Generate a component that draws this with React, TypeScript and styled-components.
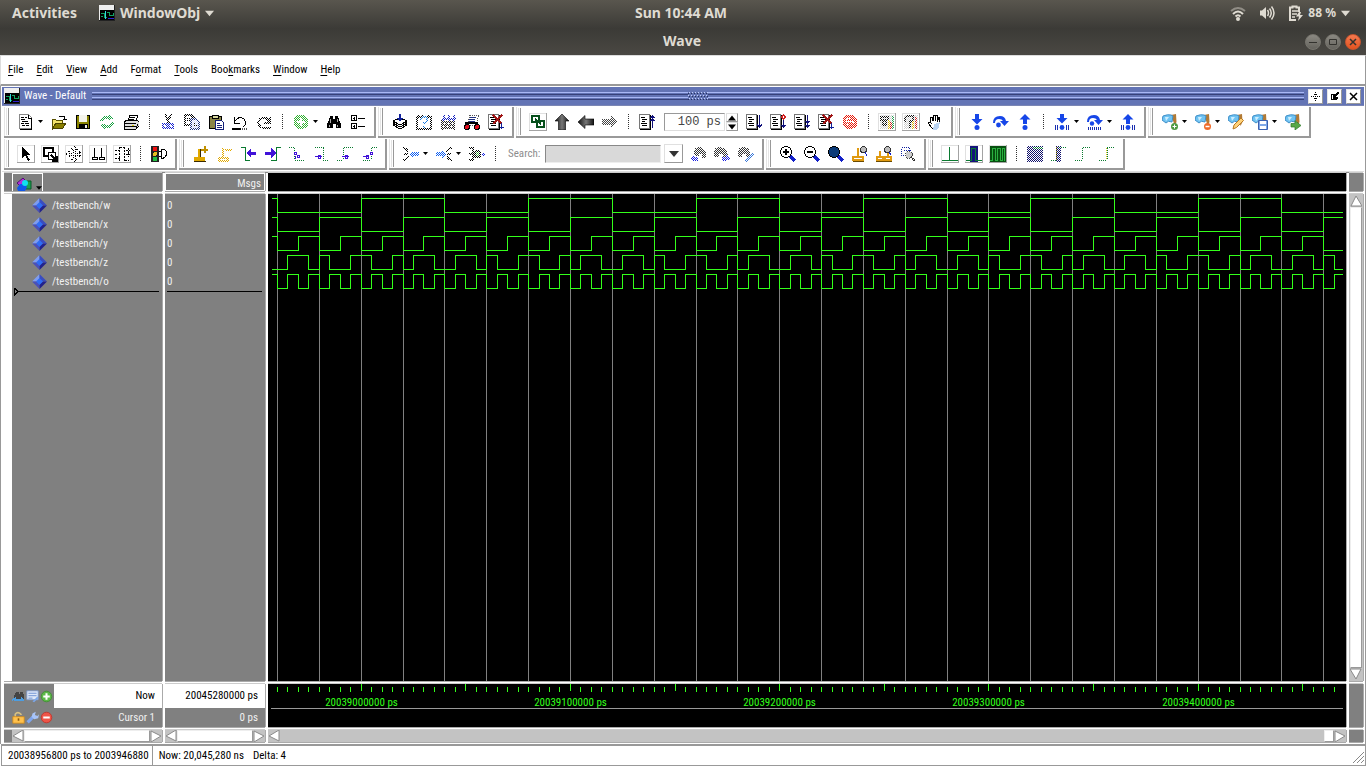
import React, { ReactNode } from "react";
import styled, { createGlobalStyle, css } from "styled-components";

const GlobalStyle = createGlobalStyle`
  * { box-sizing: border-box; }
  body { margin: 0; background: #fff; font-family: "Roboto Condensed", "Liberation Sans Narrow", "Liberation Sans", sans-serif; font-size: 11px; line-height: 14px; color: #000; }
  button, input { font: inherit; color: inherit; margin: 0; padding: 0; border: 0; background: none; border-radius: 0; }
`;

/* ---------- desktop chrome ---------- */

const Page = styled.div`
  display: flex;
  flex-direction: column;
  min-height: 100vh;
`;

const TopBar = styled.header`
  display: grid;
  grid-template-columns: 1fr auto 1fr;
  align-items: center;
  height: 28px;
  padding: 0 16px 2px 12px;
  background: linear-gradient(#59564e, #3c3b37);
  color: #dfdbd2;
  font: bold 14px/26px "Noto Sans", "Open Sans", sans-serif;
`;

const BarGroup = styled.div<{ $end?: boolean }>`
  display: flex;
  align-items: center;
  justify-content: ${(p) => (p.$end ? "flex-end" : "flex-start")};
  gap: ${(p) => (p.$end ? "13px" : "22px")};
`;

const BarButton = styled.button<{ $small?: boolean }>`
  display: flex;
  align-items: center;
  gap: 5px;
  white-space: nowrap;
  font-size: ${(p) => (p.$small ? "12px" : "14px")};
`;

const TitleBar = styled.div`
  display: grid;
  grid-template-columns: 1fr auto 1fr;
  align-items: center;
  height: 27px;
  padding: 0 5px 0 3px;
  background: linear-gradient(#3b3a36, #4a4843);
  color: #dfdbd2;
  font: bold 14px/26px "Noto Sans", "Open Sans", sans-serif;
`;

const WindowTitle = styled.h1`
  grid-column: 2;
  margin: 0 0 2px;
  font: inherit;
`;

const WindowButtons = styled.div`
  display: flex;
  justify-content: flex-end;
  gap: 4px;
`;

const RoundButton = styled.button<{ $close?: boolean }>`
  display: grid;
  place-items: center;
  width: 16px;
  height: 16px;
  border-radius: 50%;
  border: 1px solid ${(p) => (p.$close ? "#c8552f" : "#77756e")};
  background: ${(p) => (p.$close ? "linear-gradient(#f5794f, #e2531f)" : "linear-gradient(#8b8982, #65635d)")};
  color: #33322e;
`;

const MenuBar = styled.nav`
  display: flex;
  align-items: center;
  gap: 13px;
  height: 31px;
  padding: 0 7px;
  border: solid #999;
  border-width: 1px 1px 2px;
  border-top-color: #ddd;
  border-left-color: #ddd;
`;

const MenuButton = styled.button`
  text-underline-offset: 2px;
`;

/* ---------- wave panel frame ---------- */

const Panel = styled.main`
  flex: 1;
  display: flex;
  flex-direction: column;
  border: solid #999;
  border-width: 0 1px;
  padding: 1px 1px 0;
`;

const PanelTitle = styled.div`
  display: flex;
  align-items: center;
  height: 19px;
  padding: 0 3px 0 2px;
  background: #6374b5;
  color: #fff;
  border-bottom: 1px solid #7b86b4;
`;

const PanelName = styled.h2`
  margin: 0 6px 0 4px;
  font: inherit;
`;

const GripArea = styled.div`
  position: relative;
  flex: 1;
  display: flex;
  flex-direction: column;
  gap: 2px;
`;

const GripLine = styled.div`
  height: 3px;
  border-top: 1px solid #a9b8f5;
  border-bottom: 1px solid #37427a;
`;

const GripDots = styled.svg`
  position: absolute;
  left: calc(50% - 10px);
  top: 0;
`;

const PanelButtons = styled.div`
  display: flex;
  gap: 4px;
  margin-left: 4px;
`;

const PanelButton = styled.button`
  display: grid;
  place-items: center;
  width: 15px;
  height: 15px;
  background: #fff;
  border: 1px solid #e6e6e6;
  border-right-color: #999;
  border-bottom-color: #999;
`;

/* ---------- toolbars ---------- */

const ToolbarArea = styled.div`
  display: flex;
  flex-direction: column;
  gap: 1px;
  padding: 1px 0 1px 2px;
  border-bottom: 1px solid #ddd;
`;

const ToolbarRow = styled.div`
  display: flex;
  gap: 2px;
`;

const ToolbarBox = styled.div`
  display: flex;
  align-items: center;
  height: 31px;
  padding-right: 4px;
  border: solid #999;
  border-width: 0 2px 2px 0;
  box-shadow: inset 1px 0 #e4e4e4;
`;

const Handle = styled.div`
  width: 3px;
  height: 27px;
  margin: 0 5px 0 2px;
  border-left: 1px solid #e4e4e4;
  border-right: 1px solid #999;
`;

const ToolButton = styled.button<{ $raised?: boolean }>`
  display: grid;
  place-items: center;
  flex: none;
  width: 24px;
  height: 24px;
  ${(p) =>
    p.$raised &&
    css`
      background: linear-gradient(#a3a3a3, #a3a3a3) 3px 20px / 18px 1px no-repeat,
        linear-gradient(#a3a3a3, #a3a3a3) 20px 3px / 1px 18px no-repeat,
        linear-gradient(#e0e0e0, #e0e0e0) 3px 3px / 18px 1px no-repeat,
        linear-gradient(#e0e0e0, #e0e0e0) 3px 3px / 1px 18px no-repeat;
    `}
`;

const DropButton = styled.button`
  display: grid;
  place-items: center;
  width: 9px;
  height: 20px;
  padding-right: 4px;
`;

const Separator = styled.div`
  width: 1px;
  height: 16px;
  margin: 0 6px;
  background: repeating-linear-gradient(#333 0 1px, transparent 1px 2px);
`;

const RunLength = styled.div`
  display: flex;
  gap: 1px;
  margin: 0 4px 0 5px;
`;

const RunInput = styled.input`
  width: 61px;
  height: 18px;
  padding-right: 3px;
  border: 1px solid #999;
  border-right-color: #ddd;
  border-bottom-color: #ddd;
  text-align: right;
  font: 12px/16px "Liberation Mono", monospace;
  color: #444;
`;

const Spinner = styled.div`
  display: flex;
  flex-direction: column;
`;

const SpinButton = styled.button`
  display: grid;
  place-items: center;
  width: 12px;
  height: 9px;
  border: 1px solid #e0e0e0;
  border-right-color: #999;
  border-bottom-color: #999;
`;

const SearchLabel = styled.label`
  margin: 0 5px 0 6px;
  color: #8c8c8c;
`;

const SearchInput = styled.input`
  width: 116px;
  height: 18px;
  background: #d9d9d9;
  border: 1px solid #888;
  border-right-color: #eee;
  border-bottom-color: #eee;
`;

const SearchDrop = styled.button`
  display: grid;
  place-items: center;
  width: 19px;
  height: 19px;
  margin: 0 3px;
  border: 1px solid #e0e0e0;
  border-right-color: #999;
  border-bottom-color: #999;
`;

/* ---------- wave table ---------- */

const WaveGrid = styled.div`
  flex: 1;
  display: grid;
  grid-template-columns: 158px 100px 1fr 14px;
  grid-template-rows: 18px 1fr 43px 12px;
  gap: 3px;
  margin: 0 1px 2px 2px;
  border-top: 1px solid #888;
`;

const Cell = styled.div<{ $tone?: "gray" | "black" | "trough" }>`
  min-width: 0;
  overflow: hidden;
  background: ${(p) => (p.$tone === "black" ? "#000" : p.$tone === "trough" ? "#c3c3c3" : "#808080")};
  color: #f0f0f0;
  box-shadow: 1px 0 #aaa, 0 1px #aaa, 0 -1px #ccc;
`;

const HeadNames = styled(Cell)`
  padding-left: 8px;
`;

const ShapeButton = styled.button`
  display: flex;
  align-items: flex-end;
  gap: 3px;
  width: 31px;
  height: 18px;
  padding: 0 0 0 3px;
  border: 1px solid #fff;
  border-bottom: 0;
`;

const HeadMsgs = styled(Cell)`
  border: 1px solid #fff;
  padding: 3px 3px 0 0;
  text-align: right;
`;

const NamesPane = styled(Cell)`
  border-left: 8px solid #fff;
  padding-top: 2px;
`;

const List = styled.ul`
  list-style: none;
  margin: 0;
  padding: 0;
`;

const SignalRow = styled.li<{ $value?: boolean }>`
  display: flex;
  align-items: center;
  gap: 5px;
  height: 19px;
  padding-left: ${(p) => (p.$value ? "2px" : "20px")};
`;

const ValuesPane = styled(Cell)`
  padding-top: 2px;
`;

const InsertMark = styled.svg`
  display: block;
  width: 100%;
  height: 9px;
  margin-top: -3px;
  padding: 0 3px 0 2px;
`;

const WavePane = styled(Cell)`
  padding: 0 3px;
`;

const Plot = styled.svg`
  display: block;
  width: 100%;
  height: 100%;
`;

const CursorNames = styled(Cell)`
  display: grid;
  grid-template-columns: 50px 1fr;
  grid-template-rows: 24px 19px;
`;

const CursorIcons = styled.div`
  display: flex;
  align-items: center;
  justify-content: flex-end;
  gap: 1px;
  padding-right: 1px;
`;

const SmallButton = styled.button`
  display: grid;
  width: 13px;
  height: 13px;
`;

const CursorText = styled.div<{ $light?: boolean }>`
  display: flex;
  align-items: center;
  justify-content: flex-end;
  padding-right: 7px;
  background: ${(p) => (p.$light ? "#fff" : "transparent")};
  color: ${(p) => (p.$light ? "#000" : "#f0f0f0")};
`;

const CursorValues = styled(Cell)`
  display: grid;
  grid-template-rows: 24px 19px;
`;

const ScrollX = styled(Cell)<{ $corner?: boolean }>`
  display: flex;
  border-left: ${(p) => (p.$corner ? "8px solid #808080" : "0")};
`;

const ScrollY = styled(Cell)`
  display: flex;
  flex-direction: column;
  align-items: center;
  padding: 1px;
`;

const ScrollArrow = styled.button`
  display: grid;
  place-items: center;
  width: 12px;
  height: 12px;
`;

const Thumb = styled.div<{ $small?: boolean; $vertical?: boolean }>`
  flex: ${(p) => (p.$small ? "none" : "1")};
  width: ${(p) => (p.$small ? "10px" : p.$vertical ? "12px" : "auto")};
  margin-left: ${(p) => (p.$small ? "auto" : "0")};
  background: #fff;
  border: 1px solid #eee;
  border-right-color: #999;
  border-bottom-color: #999;
`;

const StatusBar = styled.footer`
  display: flex;
  height: 22px;
  margin: 0 0 2px 1px;
  border: 1px solid #999;
  border-top-width: 2px;
`;

const StatusCell = styled.div<{ $range?: boolean }>`
  flex: ${(p) => (p.$range ? "none" : "1")};
  display: flex;
  align-items: center;
  gap: 9px;
  padding: 0 3px 0 6px;
  white-space: nowrap;
  border-right: 1px solid ${(p) => (p.$range ? "#999" : "transparent")};
`;

/* ---------- icons ---------- */

const K = "#000";
const BLUE = "#1646e8";
const GREEN = "#0a7a30";
const AMBER = "#e0a800";

const Art = ({ children, dim, smooth, size = 16 }: { children: ReactNode; dim?: boolean; smooth?: boolean; size?: number }) => (
  <svg width={size} height={size} viewBox="0 0 16 16" fill="none" shapeRendering={smooth ? "auto" : "crispEdges"} aria-hidden="true">
    {children}
    {dim && <path d="M0 0h16v16H0z" fill="url(#stipple)" />}
  </svg>
);

const PageLines = () => (
  <>
    <path d="M.5 .5h10v14h-10z" fill="#fff" stroke="#777" />
    <path d="M11 1v14.500H1" stroke={K} />
    <path d="M2 3.500h4M3 5.500h5M3 7.500h3M2 9.500h6M3 11.500h5" stroke={K} />
  </>
);
const flag = (
  <>
    <path d="M9 1l5-1 .5 8-2 4-1-4z" fill="#b27a35" />
    <path d="M1 2q5-2 8-1l2 1-1 6q-4-2-6 1L0 6z" fill="#6fc3f2" stroke="#3f8fc9" />
    <path d="M3 3l4 0-3 4z" fill="#cdeeff" />
  </>
);
const lens = (fill: string) => (
  <>
    <path d="M10 10l5 5" stroke="#1320c8" strokeWidth="3" />
    <circle cx="6" cy="6" r="5.500" fill={fill} stroke={K} />
  </>
);
const binocular = <path d="M4 2h3v3h2V2h3l1 4 2 4v4h-5v-4H7v4H1v-4l2-4z" fill={K} />;

const icons: Record<string, ReactNode> = {
  doc: (<Art><path d="M1.500 .5h9l3 3v11h-12z" fill="#fff" stroke="#888" /><path d="M13.500 4v11.500H2M10.500 1v3h3" stroke={K} /><path d="M3 3.500h3M7 3.500h2M3 5.500h4M4 7.500h6M3 9.500h3M7 9.500h4M4 11.500h3M8 11.500h3" stroke={K} /></Art>),
  open: (<Art><path d="M1 5h3l1 1h6v3H6l-4 6H1z" fill="#f3e36a" stroke="#5a5200" /><path d="M2 14l3-5h10l-3 5z" fill="#8a8000" stroke="#4a4400" /><path d="M8 3l2-1h3l1 3M12 5h4V2" stroke={K} /></Art>),
  save: (<Art><path d="M1.500 1.500h13v13h-13z" fill="#8a8400" stroke={K} /><path d="M4 1h8v7H4z" fill="#f4f4ec" /><path d="M4 10h9v5H4z" fill={K} /><path d="M10 11h2v3h-2z" fill="#eee" /></Art>),
  refresh: (<Art dim><path d="M1 7q3-6 9-5V0l5 4-5 3V5q-5-1-6 3zM15 9q-3 6-9 5v2l-5-4 5-3v2q5 1 6-3z" fill="#18a040" /></Art>),
  print: (<Art><path d="M5 7l2-6h8l-2 6z" fill="#fff" stroke={K} /><path d="M7 3.500h5M6 5.500h5" stroke={K} /><path d="M1 8l3-2h10l2 2v4l-3 3H1z" fill="#ddd" stroke={K} /><path d="M1 9.500h12M1 12.500h12M13 14l2-4" stroke={K} /><path d="M9 11h2v1H9z" fill="#d8c800" /></Art>),
  cut: (<Art dim><path d="M5 0l4 9M11 0L7 9" stroke={K} strokeWidth="2" /><circle cx="5" cy="12" r="2.500" stroke="#1420d0" strokeWidth="2" /><circle cx="11" cy="12" r="2.500" stroke="#1420d0" strokeWidth="2" /></Art>),
  copy: (<Art dim><path d="M1 1h6l3 3v7H1z" stroke={K} strokeWidth="2" /><path d="M7 5h5l3 3v7H7z" fill="#cfd4ff" stroke="#203080" strokeWidth="2" /><path d="M3 4h3M3 6h3M9 9h3M9 11h4" stroke={K} /></Art>),
  paste: (<Art><path d="M1 2h12v12H1z" fill="#8a8548" stroke={K} /><path d="M4 1h6v3H4z" fill="#d8d8a0" stroke={K} /><path d="M7 6h6l2 2v7H7z" fill="#fff" stroke="#14207a" /><path d="M9 9.500h3M9 11.500h5M9 13.500h5" stroke="#14207a" /></Art>),
  undo: (<Art><path d="M2 3v6h6M2 8q5-7 10-3 4 5-1 8" stroke={K} /><path d="M0 15h9" stroke={K} strokeWidth="2" /><path d="M10 15h6" stroke="#555" strokeWidth="2" strokeDasharray="1 1" /></Art>),
  redo: (<Art dim><path d="M14 3v6H8M14 8Q9 1 4 5q-4 5 1 8" stroke={K} strokeWidth="2" /><path d="M6 14h9" stroke={K} strokeWidth="2" /></Art>),
  add: (<Art dim><circle cx="8" cy="8" r="7.500" fill="#30b030" /><path d="M7 4h2v3h3v2H9v3H7V9H4V7h3z" fill="#fff" /></Art>),
  find: (<Art>{binocular}<path d="M4 5v4M11 5v3M3 11v2M11 11v2" stroke="#aaa" /></Art>),
  tree: (<Art><path d="M1.500 1.500h5v5h-5zM1.500 9.500h5v5h-5z" stroke={K} /><path d="M3 4.500h2M4.500 3v3M3 12.500h2M4.500 11v3M8 4.500h7M8 12.500h7" stroke={K} /></Art>),
  compile: (<Art><path d="M1 11l7-3 7 3-7 4z" fill="#fff" stroke={K} /><path d="M1 9l7-3 7 3-7 4z" fill="#fff" stroke={K} /><path d="M1 7l7-3 7 3-7 4z" fill="#fff" stroke={K} /><path d="M7 0h2v4h2L8 8 5 4h2z" fill="#10209a" /></Art>),
  help: (<Art dim><path d="M1 3h14v12H1zM3 1v3M7 1v3M12 1v3" stroke={K} strokeWidth="2" /><path d="M5 6q0-3 3-3t3 3q0 2-3 3v1M8 12v2" stroke="#1c7ce0" strokeWidth="2" /></Art>),
  compileAll: (<Art dim><path d="M1 8h14M1 11h14M1 14h14M2 6v10M6 8v7M10 8v7M14 6v10" stroke="#222" strokeWidth="2" /><path d="M4 1v6M9 1v6M14 1v6M2 5h14" stroke="#1420c0" strokeWidth="2" /></Art>),
  simulate: (<Art><path d="M6 1h9l-3 10H3z" fill="#fff" stroke="#555" strokeDasharray="1 1" /><path d="M6 3.500h6M5 5.500h6M5 7.500h6" stroke="#203080" /><path d="M1 9h13" stroke={K} strokeWidth="2" /><circle cx="3" cy="13" r="2.500" fill="#e01020" stroke={K} /><circle cx="13" cy="13" r="2.500" fill="#e01020" stroke={K} /></Art>),
  breakSim: (<Art><PageLines /><path d="M5 1l9 9M14 1l-9 9" stroke="#a01414" strokeWidth="2" /><path d="M13.500 9v6M12 13.500h4" stroke="#10209a" /></Art>),
  link: (<Art><path d="M2 2h7v6H2zM7 7h7v6H7z" stroke="#06501c" strokeWidth="2" /><path d="M5 5l6 5" stroke="#06501c" strokeWidth="2" /></Art>),
  up: (<Art smooth><path d="M8 0l7 7h-3.500v9h-7V7H1z" fill="url(#metal)" stroke={K} strokeWidth=".6" /></Art>),
  left: (<Art smooth><path d="M0 8l7-6.500V5h9v6H7v3.500z" fill="url(#metal)" stroke={K} strokeWidth=".6" /></Art>),
  right: (<Art dim><path d="M16 8L9 2v3H0v6h9v3z" fill="#444" /></Art>),
  restart: (<Art><PageLines /><path d="M13.500 1v13M11 3.500h5M12 2.500h3M11 6.500h5M12 5.500h3" stroke="#10107a" /></Art>),
  run: (<Art><PageLines /><path d="M13.500 1v13M11 11.500h5M12 12.500h3M11 10.500h1M15 10.500h1" stroke="#10107a" /></Art>),
  runCont: (<Art><PageLines /><path d="M13.500 6v8M11 11.500h5M12 12.500h3" stroke="#10107a" /><path d="M13.500 1l2 2-2 2-2-2z" stroke="#d02020" /></Art>),
  runAll: (<Art><PageLines /><path d="M13.500 1v13M11 11.500h5M12 12.500h3M11 7.500h5M12 8.500h3" stroke="#10107a" /></Art>),
  stop: (<Art dim><circle cx="8" cy="8" r="6" fill="#fff" stroke="#e81808" strokeWidth="3" /><path d="M5 6h7M4 9h7M6 11h6M8 4h3" stroke="#e81808" strokeWidth="2" /></Art>),
  perf: (<Art><path d="M1 1h14v14H1z" fill="#cfcfcf" /><path d="M2 3h7v3H2zM4 6h3v5H4z" stroke="#111" strokeWidth="2" /><path d="M9 6h2v9H9z" fill="#d8b000" /><path d="M13 2h2v13h-2z" fill="#20a050" /><path d="M11 8h2v7h-2z" fill="#d02020" /><path d="M0 0h16v16H0z" fill="url(#stipple)" /></Art>),
  memory: (<Art><path d="M1 1h14v14H1z" fill="#cfcfcf" /><path d="M2 8V5q1-3 4-3h4v5H7v7" stroke="#111" strokeWidth="2" /><path d="M9 7h2v8H9z" fill="#d8b000" /><path d="M12 3h2v12h-2z" fill="#d02020" /><path d="M0 0h16v16H0z" fill="url(#stipple)" /></Art>),
  hand: (<Art><path d="M5 14L1 9l1-1 2 1-1-6h2l1 4V1h2v6l1-6h1v7l2-5h1l-1 7-2 5z" fill="#fff" stroke={K} /><path d="M7 10l6-2-1 5-3 3H6z" fill="#b9d3f2" /></Art>),
  stepIn: (<Art smooth><path d="M6 0h4v5h3.500L8 10.500 2.500 5H6z" fill={BLUE} /><circle cx="8" cy="13.500" r="2.500" fill={BLUE} /></Art>),
  stepOver: (<Art smooth><path d="M0 9q0-7 7-7 5 0 6 5h3l-4.500 5L7 7h3Q9 5 6 5 2 5 2 9z" fill={BLUE} /><circle cx="5.500" cy="11" r="2.400" fill={BLUE} /></Art>),
  stepOut: (<Art smooth><path d="M6 10h4V5.500h3.500L8 0 2.500 5.500H6z" fill={BLUE} /><circle cx="8" cy="13.500" r="2.500" fill={BLUE} /></Art>),
  stepInC: (<Art smooth><path d="M6 0h4v4h3.500L8 9.500 2.500 4H6z" fill={BLUE} /><path d="M1.500 11v5M3.500 11v5M12.500 11v5M14.500 11v5" stroke="#1a2fb0" /><circle cx="8" cy="13.500" r="2.400" fill={BLUE} /></Art>),
  stepOverC: (<Art smooth><path d="M0 8q0-7 7-7 5 0 6 5h3l-4.500 5L7 6h3Q9 4 6 4 2 4 2 8z" fill={BLUE} /><circle cx="5" cy="9.500" r="2.200" fill={BLUE} /><path d="M1.500 13v3M3.500 13v3M5.500 13v3M7.500 13v3M9.500 13v3M11.500 13v3M13.500 13v3" stroke="#1a2fb0" /></Art>),
  stepOutC: (<Art smooth><path d="M6 10h4V5.500h3.500L8 0 2.500 5.500H6z" fill={BLUE} /><path d="M1.500 11v5M3.500 11v5M12.500 11v5M14.500 11v5" stroke="#1a2fb0" /><circle cx="8" cy="13.500" r="2.400" fill={BLUE} /></Art>),
  flagAdd: (<Art smooth>{flag}<circle cx="12.500" cy="12.500" r="3.500" fill="#4d9a42" /><path d="M10.500 12.500h4M12.500 10.500v4" stroke="#fff" /></Art>),
  flagDel: (<Art smooth>{flag}<circle cx="12.500" cy="12.500" r="3.500" fill="#ef6a28" /><path d="M10.500 12.500h4" stroke="#fff" strokeWidth="1.500" /></Art>),
  flagEdit: (<Art smooth>{flag}<path d="M5 15l1-4 7-7 2.500 2.500-7 7z" fill="#ffd27a" stroke="#b87820" /></Art>),
  flagSave: (<Art smooth>{flag}<path d="M6.500 6.500h9v9h-9z" fill="#7fa8e8" stroke="#3c62b0" /><path d="M8 7h6v3H8zM8 12h6v3H8z" fill="#fff" /></Art>),
  flagGo: (<Art smooth>{flag}<path d="M6 9.500h4V6.500l6 5-6 4.500v-3H6z" fill="#58a848" stroke="#2f7a28" strokeWidth=".7" /></Art>),
  pointer: (<Art><path d="M4 1v11l3-3 3 6 2-1-3-5h4z" fill={K} /></Art>),
  zoomSel: (<Art><path d="M2 2h9v8H2z" stroke={K} strokeWidth="2" /><path d="M6 6h7v7H6z" fill="#fff" stroke={K} /><path d="M9 9l5 5M15 10v5h-5" stroke={K} strokeWidth="2" /></Art>),
  pan: (<Art><path d="M8 0l3 3H9v4h4V5l3 3-3 3V9H9v4h2l-3 3-3-3h2V9H3v2L0 8l3-3v2h4V3H5z" fill="#fff" stroke={K} strokeDasharray="1 1" /></Art>),
  cursors: (<Art><path d="M4.500 2v9M11.500 2v9M2 11.500h5v2H2zM9 11.500h5v2H9z" stroke={K} /></Art>),
  edit: (<Art><path d="M1 4.500h5M1 8.500h3M1 12.500h5M5.500 1v14M10.500 1v14M6 1.500h5M11 14.500h4M12 4.500h4M12 8.500h4M14 2v5M14 7v4" stroke={K} strokeDasharray="2 1" /></Art>),
  traffic: (<Art><path d="M0 0h8v16H0z" fill="#222" /><circle cx="4" cy="3" r="2.500" fill="#f01010" /><circle cx="4" cy="8" r="2" fill="#e8c020" /><circle cx="4" cy="13" r="2.200" fill="#20c040" /><path d="M10.500 3v9h2q3-1 3-4.500t-3-4.500zM8 5h2M8 10h2" stroke={K} /></Art>),
  curAdd: (<Art><path d="M6 3v8M2 12h9v2H2z" stroke={AMBER} strokeWidth="2" /><path d="M7.500 3v8M1 15.500h12" stroke="#3a2a00" /><path d="M11.500 0v7M8 3.500h7" stroke="#c09000" strokeWidth="2" /></Art>),
  curDel: (<Art dim><path d="M6 2v9M2 12h9v3H2zM8 4h7" stroke={AMBER} strokeWidth="2" /></Art>),
  edgeL: (<Art><path d="M0 1.500h4.500v12.500H9" stroke={GREEN} /><path d="M5 7l5-5v3.500h5v3h-5V12z" fill="#4012d8" /></Art>),
  edgeR: (<Art><path d="M16 1.500h-4.500V14H6" stroke={GREEN} /><path d="M11 7L6 2v3.500H0v3h6V12z" fill="#4012d8" /></Art>),
  ed1: (<Art><path d="M0 1.500h5M5.500 2v12M6 14.500h10" stroke={GREEN} strokeDasharray="1 1" /><path d="M5 6h2v2H5zM8 9h2v2H8zM6 10v3" stroke="#4012d8" /></Art>),
  ed2: (<Art><path d="M2 1.500h9M10.500 2v12M10 14.500h6" stroke={GREEN} strokeDasharray="1 1" /><path d="M2 10.500h7M5 9h2v3H5z" stroke="#4012d8" /></Art>),
  ed3: (<Art><path d="M7 1.500h9M6.500 2v12M0 14.500h6" stroke={GREEN} strokeDasharray="1 1" /><path d="M5 10.500h7M8 9h2v3H8z" stroke="#4012d8" /></Art>),
  ed4: (<Art><path d="M11 1.500h5M10.500 2v12M2 14.500h8" stroke={GREEN} strokeDasharray="1 1" /><path d="M2 10.500h6M5 9h2v3H5zM9 6h2v2H9z" stroke="#4012d8" /></Art>),
  nav1: (<Art dim><path d="M0 2q3 0 5 4M0 14q3 0 5-4M1 8h4" stroke={K} strokeWidth="2" /><path d="M6 8l4-4v2h6v4h-6v2z" fill="#0c5cf0" /></Art>),
  nav2: (<Art dim><path d="M16 2q-3 0-5 4M16 14q-3 0-5-4M15 8h-4" stroke={K} strokeWidth="2" /><path d="M10 8L6 4v2H0v4h6v2z" fill="#0c5cf0" /></Art>),
  nav3: (<Art dim><path d="M0 2h4M0 8h4M0 14h4M4 1v14" stroke={K} strokeWidth="2" /><circle cx="8.500" cy="8" r="3" fill="#40a040" stroke={K} strokeWidth="2" /><path d="M13 8h3" stroke="#1420e0" strokeWidth="3" /></Art>),
  findL: (<Art dim><path d="M4 9V5q1-4 5-4 5 0 7 6v5h-4V8H9v3z" fill="#333" /><path d="M0 13l4-4v2h4v4H4z" fill="#1a20e0" /></Art>),
  findR: (<Art dim><path d="M0 11V5q1-4 5-4 6 0 9 7v3H9V8H5v3z" fill="#333" /><path d="M16 13l-4-4v2H8v4h4z" fill="#1a20e0" /></Art>),
  findOpt: (<Art dim><path d="M0 11V5q1-4 5-4 5 0 7 5v5H8V8H4v3z" fill="#333" /><path d="M5 15l9-9 2 2-8 8z" fill="#3a78d8" /></Art>),
  zoomIn: (<Art>{lens("#fff")}<path d="M3 6h6M6 3v6" stroke={K} strokeWidth="2" /></Art>),
  zoomOut: (<Art>{lens("#fff")}<path d="M3 6h6" stroke={K} strokeWidth="2" /></Art>),
  zoomFull: (<Art>{lens("#0a3a78")}</Art>),
  zoomCur: (<Art><path d="M6 2v9M1 11h10v3H1z" stroke="#e09a10" strokeWidth="2" /><path d="M1 15.500h11" stroke="#6a4a00" /><circle cx="11.500" cy="3.500" r="3" fill="#bbb" stroke="#333" /><path d="M13 6l2 4" stroke="#1320c8" /></Art>),
  zoomCur2: (<Art><path d="M4 5v6M12 6v5M1 11h6v3H1zM9 11h6v3H9z" stroke="#e09a10" strokeWidth="2" /><path d="M0 15.500h16" stroke="#6a4a00" /><circle cx="11.500" cy="3.500" r="3" fill="#bbb" stroke="#333" /><path d="M13 6l2 3" stroke="#1320c8" /></Art>),
  zoomOther: (<Art><path d="M1.500 1.500h8v8h-8zM4 4.500h8" stroke="#1020a0" strokeDasharray="1 1" /><circle cx="9" cy="9" r="3.500" fill="#ccc" stroke="#444" strokeDasharray="1 1" /><path d="M11 11l4 4" stroke="#333" strokeWidth="2" strokeDasharray="1 1" /></Art>),
  expOff: (<Art><path d="M0 14.500h16M7.500 1v13" stroke={GREEN} /></Art>),
  expDelta: (<Art><path d="M4 0h8v16H4z" fill="#14147a" /><path d="M0 14.500h5.500V2.500h4v12H16" stroke={GREEN} /></Art>),
  expAll: (<Art><path d="M0 0h16v16H0z" fill="#06500f" /><path d="M0 14.500h2.500V2.500h3v12h2V2.500h3v12h2V2.500h2V14.500" stroke="#2ab040" /></Art>),
  ex1: (<Art><path d="M0 0h16v16H0z" fill="#10106a" /><path d="M6 1h10v2H6z" fill={GREEN} /><path d="M0 0h16v16H0z" fill="url(#stipple)" /></Art>),
  ex2: (<Art><path d="M5 0h5v16H5z" fill="#10106a" /><path d="M0 0h16v16H0z" fill="url(#stipple)" /><path d="M8 1.500h8M0 14.500h5" stroke={GREEN} strokeDasharray="1 1" /><path d="M5.500 1v14" stroke="#e0d030" strokeDasharray="1 1" /></Art>),
  ex3: (<Art><path d="M8 1.500h8M7.500 2v12M0 14.500h8" stroke={GREEN} strokeDasharray="1 1" /></Art>),
  ex4: (<Art><path d="M8 1.500h8M0 14.500h8M8.500 2v12" stroke={GREEN} strokeDasharray="1 1" /><path d="M7.500 2v12" stroke="#d8c820" strokeDasharray="1 1" /></Art>),
};

const WaveLogo = () => (
  <svg width="16" height="16" viewBox="0 0 16 16" fill="none" shapeRendering="crispEdges" aria-hidden="true">
    <path d="M0 0h16v16H0z" fill="#222" />
    <path d="M0 0h15v15H0z" fill="#eee" />
    <path d="M1 5h14v10H1z" fill="#000" />
    <path d="M2 8.500h3v4h3M2 11.500h2M8 7.500h2v3h4v-3M11 13.500h2" stroke="#12a060" />
    <path d="M6.500 6v8" stroke="#30d8e0" />
    <path d="M9 13.500h6" stroke="#3020d0" />
  </svg>
);

const Triangle = ({ dir = "down", size = 5, fill = "#000" }: { dir?: "down" | "up"; size?: number; fill?: string }) => (
  <svg width={size} height={size} viewBox="0 0 10 10" aria-hidden="true">
    <path d={dir === "down" ? "M0 2h10L5 8z" : "M0 8h10L5 2z"} fill={fill} />
  </svg>
);

const ArrowGlyph = ({ dir }: { dir: "up" | "down" | "left" | "right" }) => {
  const turn = { left: 0, up: 90, right: 180, down: 270 }[dir];
  return (
    <svg width="12" height="12" viewBox="0 0 12 12" aria-hidden="true">
      <path d="M11 0v11L1 6z" fill="#fff" stroke="#8a8a8a" transform={`rotate(${turn} 6 6)`} />
    </svg>
  );
};

const Diamond = () => (
  <svg width="15" height="15" viewBox="0 0 15 15" aria-hidden="true">
    <path d="M7.500 0L0 7.500h7.500z" fill="#7f9cf0" />
    <path d="M7.500 0L15 7.500H7.500z" fill="#3a4cc0" />
    <path d="M0 7.500L7.500 15V7.500z" fill="#4a50b8" />
    <path d="M15 7.500L7.500 15V7.500z" fill="#22228c" />
    <path d="M7.500 4L11 7.500 7.500 11 4 7.500z" fill="#2f6df5" />
  </svg>
);

/* ---------- toolbar contents ---------- */

type Item = { icon: string; label: string; raised?: boolean; drop?: boolean } | "|" | "run" | "search";
const t = (icon: string, label: string, o: { raised?: boolean; drop?: boolean } = {}): Item => ({ icon, label, ...o });
const R = { raised: true };
const D = { drop: true };

const rowOne: Item[][] = [
  [t("doc", "New", D), t("open", "Open"), t("save", "Save"), t("refresh", "Reload"), t("print", "Print"), "|", t("cut", "Cut"), t("copy", "Copy"), t("paste", "Paste"), t("undo", "Undo"), t("redo", "Redo"), "|", t("add", "Add", D), t("find", "Find"), t("tree", "Collapse all")],
  [t("compile", "Compile"), t("help", "Compile out of date"), t("compileAll", "Compile all"), t("simulate", "Simulate"), t("breakSim", "End simulation")],
  [t("link", "Environment", R), t("up", "Up"), t("left", "Back"), t("right", "Forward"), "|", t("restart", "Restart"), "run", t("run", "Run"), t("runCont", "Continue run"), t("runAll", "Run all"), t("breakSim", "Break"), t("stop", "Stop"), "|", t("perf", "Performance profiling", R), t("memory", "Memory profiling", R), t("hand", "Edit breakpoints")],
  [t("stepIn", "Step into"), t("stepOver", "Step over"), t("stepOut", "Step out"), "|", t("stepInC", "Step into current", D), t("stepOverC", "Step over current", D), t("stepOutC", "Step out current")],
  [t("flagAdd", "Add bookmark", D), t("flagDel", "Delete bookmark", D), t("flagEdit", "Manage bookmarks"), t("flagSave", "Save bookmark", D), t("flagGo", "Go to bookmark")],
];

const rowTwo: Item[][] = [
  [t("pointer", "Select mode", R), t("zoomSel", "Zoom mode", R), t("pan", "Pan mode", R), t("cursors", "Two cursor mode", R), t("edit", "Edit mode", R), "|", t("traffic", "Stop drawing")],
  [t("curAdd", "Insert cursor"), t("curDel", "Delete cursor"), t("edgeL", "Previous transition"), t("edgeR", "Next transition"), t("ed1", "Previous falling edge"), t("ed2", "Next falling edge"), t("ed3", "Previous rising edge"), t("ed4", "Next rising edge")],
  [t("nav1", "Drivers", D), t("nav2", "Readers", D), t("nav3", "Both"), "|", "search", t("findL", "Search reverse"), t("findR", "Search forward"), t("findOpt", "Search options")],
  [t("zoomIn", "Zoom in"), t("zoomOut", "Zoom out"), t("zoomFull", "Zoom full"), t("zoomCur", "Zoom on cursor"), t("zoomCur2", "Zoom between cursors"), t("zoomOther", "Zoom other window")],
  [t("expOff", "Expanded time off", R), t("expDelta", "Expanded time deltas", R), t("expAll", "Expanded time events", R), "|", t("ex1", "Expand all time"), t("ex2", "Expand at cursor"), t("ex3", "Collapse all time"), t("ex4", "Collapse at cursor")],
];

const RunBox = () => (
  <RunLength>
    <RunInput aria-label="Run length" defaultValue="100 ps" />
    <Spinner>
      <SpinButton aria-label="Increase"><Triangle dir="up" size={8} /></SpinButton>
      <SpinButton aria-label="Decrease"><Triangle size={8} /></SpinButton>
    </Spinner>
  </RunLength>
);

const SearchBox = () => (
  <>
    <SearchLabel htmlFor="wave-search">Search:</SearchLabel>
    <SearchInput id="wave-search" />
    <SearchDrop aria-label="Search history"><Triangle size={10} fill="#333" /></SearchDrop>
  </>
);

const Toolbar = ({ items }: { items: Item[] }) => (
  <ToolbarBox role="toolbar">
    <Handle />
    {items.map((item, i) => {
      if (item === "|") return <Separator key={i} />;
      if (item === "run") return <RunBox key={i} />;
      if (item === "search") return <SearchBox key={i} />;
      return (
        <React.Fragment key={i}>
          <ToolButton $raised={item.raised} aria-label={item.label}>{icons[item.icon]}</ToolButton>
          {item.drop && <DropButton aria-label={`${item.label} options`}><Triangle /></DropButton>}
        </React.Fragment>
      );
    })}
  </ToolbarBox>
);

/* ---------- waveforms ---------- */

const QUARTER = 10.4625;
const ORIGIN = 6;
const STEPS = 240;
const parity = (n: number) => n.toString(2).split("1").length % 2 === 0;

const signals: { name: string; level: (q: number) => boolean }[] = [
  { name: "/testbench/w", level: (q) => (q & 8) !== 0 },
  { name: "/testbench/x", level: (q) => (q & 4) !== 0 },
  { name: "/testbench/y", level: (q) => (q & 2) !== 0 },
  { name: "/testbench/z", level: (q) => parity(q & 15) },
  { name: "/testbench/o", level: (q) => (q & 1) !== 0 },
];

const stepX = (q: number) => Math.round(ORIGIN + q * QUARTER) + 0.5;

const wavePath = (level: (q: number) => boolean, row: number) => {
  const y = (high: boolean) => row * 19 + (high ? 4.5 : 18.5);
  let high = level(15);
  let d = `M1 ${y(high)}`;
  for (let q = 0; q < STEPS; q++) {
    if (level(q) !== high) {
      high = !high;
      d += `H${stepX(q)}V${y(high)}`;
    }
  }
  return `${d}H${stepX(STEPS)}`;
};

const Waves = () => (
  <Plot role="img" aria-label="Signal waveforms" shapeRendering="crispEdges">
    {Array.from({ length: STEPS / 4 }, (_, i) => (
      <line key={i} x1={stepX(i * 4)} x2={stepX(i * 4)} y1="0" y2="100%" stroke="#808080" />
    ))}
    {signals.map((s, i) => (
      <path key={s.name} d={wavePath(s.level, i)} fill="none" stroke="#33ff1a" />
    ))}
  </Plot>
);

const Ruler = () => (
  <Plot role="img" aria-label="Time ruler">
    <g stroke="#33ff1a" shapeRendering="crispEdges">
      {Array.from({ length: STEPS }, (_, q) => (
        <line key={q} x1={stepX(q)} x2={stepX(q)} y1={q % 10 === 8 ? 0 : 3} y2={q % 10 === 8 ? 7 : 8} />
      ))}
    </g>
    <line x1="0" x2="100%" y1="24.500" y2="24.500" stroke="#999" shapeRendering="crispEdges" />
    {Array.from({ length: 5 }, (_, i) => (
      <text key={i} x={stepX(8 + i * 20)} y="22" fill="#33ff1a" textAnchor="middle">{`${20039000000 + i * 100000} ps`}</text>
    ))}
  </Plot>
);

const menus: [string, number][] = [["File", 0], ["Edit", 0], ["View", 0], ["Add", 0], ["Format", 1], ["Tools", 0], ["Bookmarks", 3], ["Window", 0], ["Help", 0]];

const HScroll = ({ corner, small }: { corner?: boolean; small?: boolean }) => (
  <ScrollX $tone="trough" $corner={corner}>
    <ScrollArrow aria-label="Scroll left"><ArrowGlyph dir="left" /></ScrollArrow>
    <Thumb $small={small} />
    <ScrollArrow aria-label="Scroll right"><ArrowGlyph dir="right" /></ScrollArrow>
  </ScrollX>
);

const HiddenDefs = styled.svg`
  position: absolute;
`;

export default function App() {
  return (
    <Page>
      <GlobalStyle />
      <HiddenDefs width="0" height="0" aria-hidden="true">
        <defs>
          <pattern id="stipple" width="2" height="2" patternUnits="userSpaceOnUse">
            <path d="M0 0h1v1H0zM1 1h1v1H1z" fill="#fff" />
          </pattern>
          <linearGradient id="metal">
            <stop offset="0" stopColor="#111" />
            <stop offset=".5" stopColor="#777" />
            <stop offset="1" stopColor="#111" />
          </linearGradient>
        </defs>
      </HiddenDefs>

      <TopBar>
        <BarGroup>
          <BarButton>Activities</BarButton>
          <BarButton><WaveLogo />WindowObj<Triangle size={9} fill="#dfdbd2" /></BarButton>
        </BarGroup>
        <BarButton>Sun 10:44 AM</BarButton>
        <BarGroup $end>
          <svg width="16" height="16" viewBox="0 0 16 16" fill="none" stroke="#dfdbd2" strokeWidth="2" aria-label="Wi-Fi">
            <path d="M1 6q7-6 14 0" opacity=".45" /><path d="M3 9q5-5 10 0" /><path d="M5.500 11.500q2.500-2.500 5 0" /><circle cx="8" cy="14" r="1" fill="#dfdbd2" />
          </svg>
          <svg width="16" height="16" viewBox="0 0 16 16" fill="none" stroke="#dfdbd2" strokeWidth="1.500" aria-label="Volume">
            <path d="M1 5.500h2L7 2v12l-4-3.500H1z" fill="#dfdbd2" stroke="none" /><path d="M8.500 5q2 3 0 6M10.500 3.500q3.500 4.500 0 9M12.500 1.500q5 6.500 0 13" />
          </svg>
          <BarButton $small>
            <svg width="15" height="16" viewBox="0 0 15 16" fill="none" stroke="#dfdbd2" aria-hidden="true">
              <path d="M11 7V2.500H8.500v-1h-4v1H2v12.500h6" strokeWidth="2" /><path d="M4 6h6M4 9h5M4 12h3" strokeWidth="1.500" /><path d="M11 7l-3 4.500h3L10 16l5-6h-3l1-3z" fill="#dfdbd2" stroke="none" />
            </svg>
            88 %<Triangle size={9} fill="#dfdbd2" />
          </BarButton>
        </BarGroup>
      </TopBar>

      <TitleBar>
        <WindowTitle>Wave</WindowTitle>
        <WindowButtons>
          <RoundButton aria-label="Minimize"><svg width="8" height="8"><path d="M0 4.500h8" stroke="currentColor" /></svg></RoundButton>
          <RoundButton aria-label="Maximize"><svg width="8" height="8" fill="none"><path d="M.5 1.500h7v5h-7z" stroke="currentColor" /></svg></RoundButton>
          <RoundButton $close aria-label="Close"><svg width="8" height="8"><path d="M1 1l6 6M7 1L1 7" stroke="currentColor" strokeWidth="1.500" /></svg></RoundButton>
        </WindowButtons>
      </TitleBar>

      <MenuBar>
        {menus.map(([name, u]) => (
          <MenuButton key={name}>{name.slice(0, u)}<u>{name[u]}</u>{name.slice(u + 1)}</MenuButton>
        ))}
      </MenuBar>

      <Panel>
        <PanelTitle>
          <WaveLogo />
          <PanelName>Wave - Default</PanelName>
          <GripArea>
            <GripLine />
            <GripLine />
            <GripDots width="20" height="8" shapeRendering="crispEdges">
              <path d="M0 0h20v8H0z" fill="#6374b5" />
              <path d="M0 1.500h20M1 4.500h19M0 7.500h20" stroke="#27315e" strokeDasharray="1 2" />
              <path d="M1 .5h19M0 3.500h20M1 6.500h19" stroke="#c4cffa" strokeDasharray="1 2" />
            </GripDots>
          </GripArea>
          <PanelButtons>
            <PanelButton aria-label="Zoom pane"><svg width="9" height="9" shapeRendering="crispEdges"><path d="M4.500 0v9M0 4.500h9M3 2.500h3M3 6.500h3" stroke="#000" strokeDasharray="1 1" /></svg></PanelButton>
            <PanelButton aria-label="Undock"><svg width="9" height="9" shapeRendering="crispEdges" fill="none"><path d="M4 2.500H1.500v5h5V5" stroke="#000" /><path d="M8.500 .5L3 6M3.500 2v4h4" stroke="#000" strokeWidth="2" /></svg></PanelButton>
            <PanelButton aria-label="Close pane"><svg width="9" height="9"><path d="M1 1l7 7M8 1L1 8" stroke="#000" strokeWidth="1.500" /></svg></PanelButton>
          </PanelButtons>
        </PanelTitle>

        <ToolbarArea>
          <ToolbarRow>{rowOne.map((items, i) => <Toolbar key={i} items={items} />)}</ToolbarRow>
          <ToolbarRow>{rowTwo.map((items, i) => <Toolbar key={i} items={items} />)}</ToolbarRow>
        </ToolbarArea>

        <WaveGrid>
          <HeadNames>
            <ShapeButton aria-label="Object filter">
              <svg width="17" height="14" viewBox="0 0 17 14" aria-hidden="true">
                <path d="M1 6l6-5 3 3-6 5z" fill="#b030d8" stroke="#501070" /><path d="M9 4h6v8H9z" fill="#18a050" stroke="#0a5a28" /><path d="M1 11l3-4h5l2 3-2 4H2z" fill="#1058e8" /><circle cx="9" cy="6" r="3" fill="#10e0f0" />
              </svg>
              <Triangle size={6} />
            </ShapeButton>
          </HeadNames>
          <HeadMsgs>Msgs</HeadMsgs>
          <Cell $tone="black" />
          <Cell />

          <NamesPane>
            <List>{signals.map((s) => <SignalRow key={s.name}><Diamond />{s.name}</SignalRow>)}</List>
            <InsertMark shapeRendering="crispEdges"><path d="M.5 0v7L4 3.500z" fill="none" stroke="#000" /><line x1="3" x2="100%" y1="3.500" y2="3.500" stroke="#000" /></InsertMark>
          </NamesPane>
          <ValuesPane>
            <List>{signals.map((s) => <SignalRow $value key={s.name}>0</SignalRow>)}</List>
            <InsertMark shapeRendering="crispEdges"><line x1="0" x2="100%" y1="3.500" y2="3.500" stroke="#000" /></InsertMark>
          </ValuesPane>
          <WavePane $tone="black"><Waves /></WavePane>
          <ScrollY $tone="trough">
            <ScrollArrow aria-label="Scroll up"><ArrowGlyph dir="up" /></ScrollArrow>
            <Thumb $vertical />
            <ScrollArrow aria-label="Scroll down"><ArrowGlyph dir="down" /></ScrollArrow>
          </ScrollY>

          <CursorNames>
            <CursorIcons>
              <SmallButton aria-label="Find cursor"><Art size={13}><path d="M3 6l2-3h3v2h2V3h3l2 4v5H2z" fill="#444" /><path d="M0 13l4-3v2h8v-2l3 3" stroke="#4d9de0" strokeWidth="2" /></Art></SmallButton>
              <SmallButton aria-label="Grid settings"><Art size={13} smooth><path d="M1 1h14v11H1z" fill="#dfe8f8" stroke="#7a98cc" /><path d="M3 4h10M3 7h10M3 10h5" stroke="#5a84cc" /><path d="M8 14l6-6 1 2-5 5z" fill="#7aa6e8" /></Art></SmallButton>
              <SmallButton aria-label="Add cursor"><Art size={13} smooth><circle cx="8" cy="8" r="6.500" fill="#5cb848" stroke="#3c8c30" /><path d="M4 8h8M8 4v8" stroke="#fff" strokeWidth="2.500" /></Art></SmallButton>
            </CursorIcons>
            <CursorText $light>Now</CursorText>
            <CursorIcons>
              <SmallButton aria-label="Lock cursor"><Art size={13} smooth><path d="M4 8V4q3-4 7 0v1" stroke="#d8c080" strokeWidth="2" /><path d="M1 7h14v8H1z" fill="#ffc14d" stroke="#d08a1a" /><path d="M7 9h2v3H7z" fill="#8a5a10" /></Art></SmallButton>
              <SmallButton aria-label="Edit cursor"><Art size={13} smooth><path d="M2 14l8-8" stroke="#7fa6ee" strokeWidth="4" /><path d="M8 3l4-2-1 4 3 1 2-2-1 5-5 1-3-3z" fill="#a8c4f8" /></Art></SmallButton>
              <SmallButton aria-label="Delete cursor"><Art size={13} smooth><circle cx="8" cy="8" r="6.500" fill="#ee5548" stroke="#c03028" /><path d="M4 8h8" stroke="#fff" strokeWidth="2.500" /></Art></SmallButton>
            </CursorIcons>
            <CursorText>Cursor 1</CursorText>
          </CursorNames>
          <CursorValues>
            <CursorText $light>20045280000 ps</CursorText>
            <CursorText>0 ps</CursorText>
          </CursorValues>
          <WavePane $tone="black"><Ruler /></WavePane>
          <Cell />

          <HScroll corner />
          <HScroll />
          <HScroll small />
          <Cell />
        </WaveGrid>
      </Panel>

      <StatusBar>
        <StatusCell $range>20038956800 ps to 2003946880</StatusCell>
        <StatusCell><span>Now: 20,045,280 ns</span><span>Delta: 4</span></StatusCell>
        <svg width="14" height="18" viewBox="0 0 14 18" aria-hidden="true"><path d="M2 17L13 6M6 17l7-7M10 17l3-3" stroke="#888" /></svg>
      </StatusBar>
    </Page>
  );
}
